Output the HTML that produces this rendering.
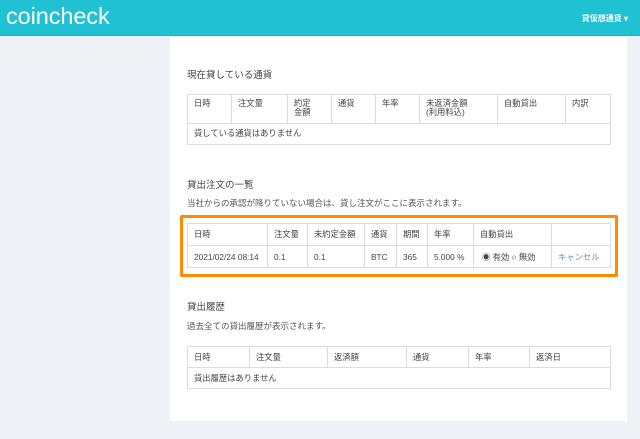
<!DOCTYPE html>
<html><head><meta charset="utf-8"><style>
*{margin:0;padding:0;box-sizing:border-box}
body{width:640px;height:439px;background:#eef1f5;font-family:"Liberation Sans","Noto Sans CJK JP",sans-serif;color:#444;font-size:8.5px;position:relative;overflow:hidden}
.hd{position:absolute;left:0;top:0;width:640px;height:36px;background:#21c1d4;border-bottom:1px solid #1db0c2}
.logo{position:absolute;left:6px;top:3px;color:#fff;font-size:23.5px;font-weight:300;letter-spacing:-.1px}
.menu{position:absolute;right:12px;top:13px;color:#fff;font-size:8px;font-weight:bold}
.panel{position:absolute;left:170px;top:37px;width:457px;height:384px;background:#fff}
.t{position:absolute;font-size:9.5px;color:#444}
.d{position:absolute;font-size:8.5px;color:#555}
table{position:absolute;border-collapse:collapse;table-layout:fixed}
td{border:1px solid #ddd;padding:0 6px;vertical-align:top;font-size:8.3px;line-height:9px;color:#444}
.box{position:absolute;left:180px;top:215px;width:438px;height:62px;border:3px solid #ff8c00;border-radius:2px}
</style></head><body>
<div class="hd"><div class="logo">coincheck</div><div class="menu">貸仮想通貨 ▾</div></div>
<div class="panel"></div>
<div class="t" style="left:187px;top:67px">現在貸している通貨</div>
<table style="left:187px;top:94px;width:423px">
<colgroup><col style="width:44px"><col style="width:56px"><col style="width:44px"><col style="width:44px"><col style="width:44px"><col style="width:78px"><col style="width:68px"><col style="width:45px"></colgroup>
<tr style="height:29px"><td style="padding-top:4px">日時</td><td style="padding-top:4px">注文量</td><td style="padding-top:4px">約定<br>金額</td><td style="padding-top:4px">通貨</td><td style="padding-top:4px">年率</td><td style="padding-top:4px">未返済金額<br>(利用料込)</td><td style="padding-top:4px">自動貸出</td><td style="padding-top:4px">内訳</td></tr>
<tr style="height:21px"><td colspan="8" style="padding-top:5px">貸している通貨はありません</td></tr>
</table>
<div class="t" style="left:187px;top:177px">貸出注文の一覧</div>
<div class="d" style="left:187px;top:197px">当社からの承認が降りていない場合は、貸し注文がここに表示されます。</div>
<div class="box"></div>
<table style="left:187px;top:223px;width:423px">
<colgroup><col style="width:80px"><col style="width:40px"><col style="width:57px"><col style="width:32px"><col style="width:31px"><col style="width:46px"><col style="width:78px"><col style="width:59px"></colgroup>
<tr style="height:22px"><td style="padding-top:6px">日時</td><td style="padding-top:6px">注文量</td><td style="padding-top:6px">未約定金額</td><td style="padding-top:6px">通貨</td><td style="padding-top:6px">期間</td><td style="padding-top:6px">年率</td><td style="padding-top:6px">自動貸出</td><td></td></tr>
<tr style="height:22px"><td style="padding-top:7px">2021/02/24 08:14</td><td style="padding-top:7px">0.1</td><td style="padding-top:7px">0.1</td><td style="padding-top:7px">BTC</td><td style="padding-top:7px">365</td><td style="padding-top:7px">5.000 %</td><td style="padding-top:7px;padding-left:8px">◉ 有効 ○ 無効</td><td style="padding-top:7px;color:#5a8fc8">キャンセル</td></tr>
</table>
<div class="t" style="left:187px;top:299px">貸出履歴</div>
<div class="d" style="left:187px;top:320px">過去全ての貸出履歴が表示されます。</div>
<table style="left:187px;top:346px;width:423px">
<colgroup><col style="width:62px"><col style="width:78px"><col style="width:79px"><col style="width:62px"><col style="width:61px"><col style="width:81px"></colgroup>
<tr style="height:21px"><td style="padding-top:6px">日時</td><td style="padding-top:6px">注文量</td><td style="padding-top:6px">返済額</td><td style="padding-top:6px">通貨</td><td style="padding-top:6px">年率</td><td style="padding-top:6px">返済日</td></tr>
<tr style="height:21px"><td colspan="6" style="padding-top:6px">貸出履歴はありません</td></tr>
</table>
</body></html>
